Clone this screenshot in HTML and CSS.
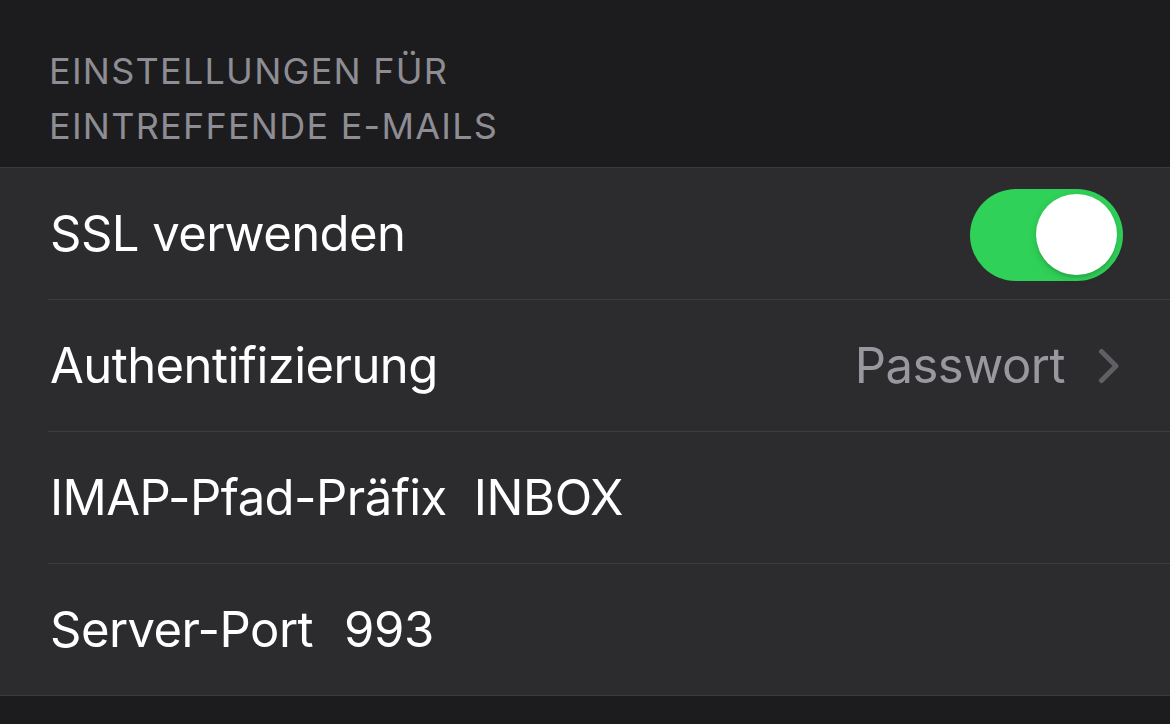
FILE: index.html
```html
<!DOCTYPE html>
<html lang="de">
<head>
<meta charset="utf-8">
<link rel="stylesheet" href="styles.css">
</head>
<body>
<div class="header">EINSTELLUNGEN FÜR<br>EINTREFFENDE E-MAILS</div>
<div class="group">
  <div class="row">
    <div class="row-inner">
      <span class="label">SSL verwenden</span>
      <span class="spacer"></span>
      <span class="toggle"><span class="knob"></span></span>
    </div>
  </div>
  <div class="row">
    <div class="row-inner">
      <span class="label">Authentifizierung</span>
      <span class="spacer"></span>
      <span class="detail">Passwort</span>
      <svg class="chevron" width="22" height="36" viewBox="0 0 22 36"><path d="M3.5 3.5 L18 18 L3.5 32.5" fill="none" stroke="#5f5f64" stroke-width="5" stroke-linecap="round" stroke-linejoin="round"/></svg>
    </div>
  </div>
  <div class="row">
    <div class="row-inner">
      <span class="label">IMAP-Pfad-Präfix</span>
      <span class="value inbox">INBOX</span>
    </div>
  </div>
  <div class="row last">
    <div class="row-inner">
      <span class="label">Server-Port</span>
      <span class="value">993</span>
    </div>
  </div>
</div>
</body>
</html>
```

FILE: styles.css
```css
html, body {
  margin: 0;
  padding: 0;
}
body {
  background: #1c1c1e;
  font-family: Inter, "Noto Sans", sans-serif;
  color: #ffffff;
  width: 1170px;
  height: 724px;
  overflow: hidden;
}
.header {
  height: 167px;
  box-sizing: border-box;
  padding: 44px 50px 0 49px;
  font-size: 36px;
  line-height: 55px;
  color: #8d8d93;
  letter-spacing: 1.25px;
}
.group {
  background: #2c2c2e;
  border-top: 1px solid #3a3a3d;
  border-bottom: 1px solid #3a3a3d;
}
.row {
  padding-left: 48px;
}
.row-inner {
  height: 131px;
  display: flex;
  align-items: center;
  padding-right: 48px;
  border-bottom: 1px solid #3d3d40;
}
.row.last .row-inner {
  border-bottom: none;
}
.label {
  font-size: 49px;
  padding-left: 2px;
  letter-spacing: -0.55px;
}
.spacer {
  flex: 1;
}
.value {
  font-size: 49px;
  margin-left: 31px;
  letter-spacing: -0.4px;
}
.value.inbox {
  margin-left: 27px;
}
.detail {
  font-size: 49px;
  color: #98989e;
  letter-spacing: -0.5px;
  margin-right: 33px;
}
.chevron {
  display: block;
  margin-right: 2px;
}
.toggle {
  width: 153px;
  height: 92px;
  border-radius: 46px;
  background: #30d158;
  position: relative;
  margin-right: -1px;
  margin-top: 2px;
}
.knob {
  position: absolute;
  right: 6px;
  top: 5px;
  width: 81px;
  height: 81px;
  border-radius: 50%;
  background: #ffffff;
  box-shadow: 0 3px 8px rgba(0,0,0,0.15), 0 3px 1px rgba(0,0,0,0.06);
}
```
